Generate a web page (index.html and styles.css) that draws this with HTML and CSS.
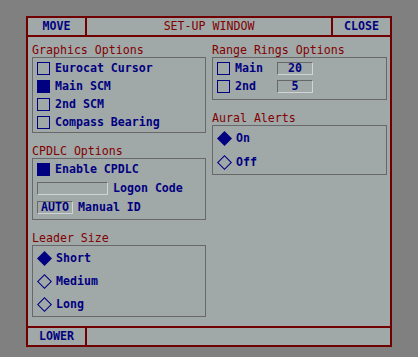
FILE: index.html
```html
<!DOCTYPE html>
<html lang="en">
<head>
    <meta charset="UTF-8">
    <title>Set-Up Window</title>
    <link rel="stylesheet" href="styles.css">
</head>
<body>
    <div class="window">
        <div class="titlebar">
            <div class="bar-btn">MOVE</div>
            <div class="bar-title">SET-UP WINDOW</div>
            <div class="bar-btn close">CLOSE</div>
        </div>

        <div class="content">
            <div class="column">
                <div class="section">
                    <div class="heading">Graphics Options</div>
                    <div class="group graphics">
                        <div class="row"><span class="check"></span>Eurocat Cursor</div>
                        <div class="row"><span class="check on"></span>Main SCM</div>
                        <div class="row"><span class="check"></span>2nd SCM</div>
                        <div class="row"><span class="check"></span>Compass Bearing</div>
                    </div>
                </div>

                <div class="section">
                    <div class="heading">CPDLC Options</div>
                    <div class="group cpdlc">
                        <div class="row"><span class="check on"></span>Enable CPDLC</div>
                        <div class="row"><span class="field wide"></span>Logon Code</div>
                        <div class="row"><span class="field">AUTO</span>Manual ID</div>
                    </div>
                </div>

                <div class="section">
                    <div class="heading">Leader Size</div>
                    <div class="group radios leader">
                        <div class="row radio">
                            <svg class="diamond" width="15" height="15" viewBox="0 0 15 15"><path d="M7.5 0L15 7.5L7.5 15L0 7.5Z"/></svg>
                            Short
                        </div>
                        <div class="row radio">
                            <svg class="diamond" width="15" height="15" viewBox="0 0 15 15"><path fill-rule="evenodd" d="M7.5 0L15 7.5L7.5 15L0 7.5Z M7.5 1.5L13.5 7.5L7.5 13.5L1.5 7.5Z"/></svg>
                            Medium
                        </div>
                        <div class="row radio">
                            <svg class="diamond" width="15" height="15" viewBox="0 0 15 15"><path fill-rule="evenodd" d="M7.5 0L15 7.5L7.5 15L0 7.5Z M7.5 1.5L13.5 7.5L7.5 13.5L1.5 7.5Z"/></svg>
                            Long
                        </div>
                    </div>
                </div>
            </div>

            <div class="column">
                <div class="section">
                    <div class="heading">Range Rings Options</div>
                    <div class="group rings">
                        <div class="row"><span class="check"></span><span class="ring-label">Main</span><span class="field">20</span></div>
                        <div class="row"><span class="check"></span><span class="ring-label">2nd</span><span class="field">5</span></div>
                    </div>
                </div>

                <div class="section">
                    <div class="heading">Aural Alerts</div>
                    <div class="group radios aural">
                        <div class="row radio">
                            <svg class="diamond" width="15" height="15" viewBox="0 0 15 15"><path d="M7.5 0L15 7.5L7.5 15L0 7.5Z"/></svg>
                            On
                        </div>
                        <div class="row radio">
                            <svg class="diamond" width="15" height="15" viewBox="0 0 15 15"><path fill-rule="evenodd" d="M7.5 0L15 7.5L7.5 15L0 7.5Z M7.5 1.5L13.5 7.5L7.5 13.5L1.5 7.5Z"/></svg>
                            Off
                        </div>
                    </div>
                </div>
            </div>
        </div>

        <div class="bottombar">
            <div class="bar-btn">LOWER</div>
        </div>
    </div>
</body>
</html>
```

FILE: styles.css
```css
body {
    margin: 0;
    padding: 16px 0 0 26px;
    background-color: #808080;
    font-family: "DejaVu Sans Mono", "Liberation Mono", monospace;
    font-size: 11.6px;
    line-height: 13px;
}
.window {
    box-sizing: border-box;
    width: 366px;
    height: 331px;
    border: 2px solid #700000;
    background-color: #a0a8a8;
    display: flex;
    flex-direction: column;
}
/* title and bottom bars */
.titlebar,
.bottombar {
    height: 17px;
    display: flex;
    flex-shrink: 0;
}
.titlebar {
    border-bottom: 2px solid #700000;
}
.bottombar {
    border-top: 2px solid #700000;
}
.bar-btn {
    width: 57px;
    border-right: 2px solid #700000;
    color: #000080;
    font-weight: bold;
    display: flex;
    align-items: center;
    justify-content: center;
}
.bar-btn.close {
    border-right: none;
    border-left: 2px solid #700000;
}
.bar-title {
    flex: 1;
    color: #800000;
    display: flex;
    align-items: center;
    justify-content: center;
}
/* main area */
.content {
    flex: 1;
    display: grid;
    grid-template-columns: 174px 175px;
    column-gap: 6px;
    padding: 7px 0 0 4px;
    align-content: start;
    align-items: start;
}
.section + .section {
    margin-top: 12px;
}
.heading {
    color: #800000;
    height: 13px;
}
.group {
    border: 1px solid #686868;
    display: flex;
    flex-direction: column;
    padding: 4px 4px 3px;
}
.row {
    height: 13px;
    display: flex;
    align-items: center;
    gap: 5px;
    color: #000080;
    font-weight: bold;
}
.graphics {
    gap: 5px;
}
.cpdlc {
    gap: 6px;
    padding-bottom: 5px;
}
.rings {
    gap: 5px;
    padding-bottom: 6px;
}
.ring-label {
    width: 37px;
}
.check {
    box-sizing: border-box;
    width: 13px;
    height: 13px;
    border: 1px solid #000080;
}
.check.on {
    background-color: #000080;
}
.field {
    box-sizing: border-box;
    width: 36px;
    height: 13px;
    border-top: 1px solid #686868;
    border-left: 1px solid #686868;
    border-bottom: 1px solid #d0d4d4;
    border-right: 1px solid #d0d4d4;
    display: flex;
    align-items: center;
    justify-content: center;
}
.field.wide {
    width: 71px;
}
/* radio lists with diamond markers */
.radios {
    padding: 0 4px;
}
.leader {
    padding-top: 1px;
}
.radio {
    height: 23px;
    gap: 4px;
}
.aural .radio {
    height: 24px;
}
.diamond path {
    fill: #000080;
}
```
